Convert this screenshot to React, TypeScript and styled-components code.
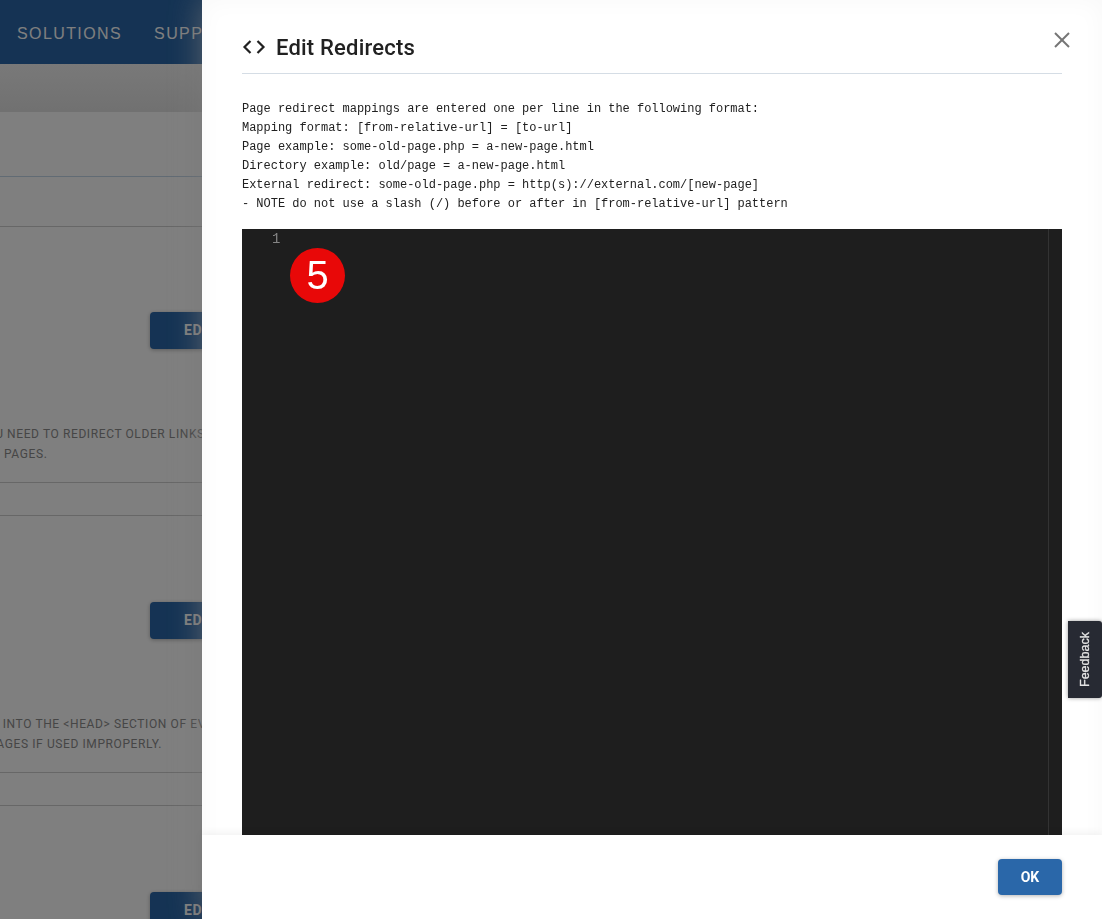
import React from "react";
import styled, { createGlobalStyle } from "styled-components";

const GlobalStyle = createGlobalStyle`
  html, body {
    margin: 0;
    height: 100%;
    overflow: hidden;
    background: #fff;
    font-family: "Roboto", "Liberation Sans", sans-serif;
  }
`;

const instructions = [
  "Page redirect mappings are entered one per line in the following format:",
  "Mapping format: [from-relative-url] = [to-url]",
  "Page example: some-old-page.php = a-new-page.html",
  "Directory example: old/page = a-new-page.html",
  "External redirect: some-old-page.php = http(s)://external.com/[new-page]",
  "- NOTE do not use a slash (/) before or after in [from-relative-url] pattern",
];

function App() {
  return (
    <>
      <GlobalStyle />
      <Page>
        <NavBar>
          <NavLink>SOLUTIONS</NavLink>
          <NavLink>SUPPORT</NavLink>
        </NavBar>
        <SubBar />
        <TabArea />
        <FieldRow />
        <Section $top={85}>
          <EditButton>EDIT</EditButton>
          <Description $shift={-36}>
            IF YOU NEED TO REDIRECT OLDER LINKS TO NEW
            <br />
            <Indent $width={40} />
            PAGES.
          </Description>
          <Rule $gap={18} />
          <Rule $gap={32} />
        </Section>
        <Section $top={86}>
          <EditButton>EDIT</EditButton>
          <Description $shift={-34}>
            CODE INTO THE &lt;HEAD&gt; SECTION OF EVERY
            <br />
            <Indent $width={23} />
            PAGES IF USED IMPROPERLY.
          </Description>
          <Rule $gap={18} />
          <Rule $gap={32} />
        </Section>
        <Section $top={86}>
          <EditButton>EDIT</EditButton>
        </Section>
      </Page>
      <Overlay />
      <Drawer>
        <DrawerHeader>
          <svg width="24" height="16" viewBox="0 0 24 16" fill="none" stroke="#212121" strokeWidth="2.2">
            <polyline points="8.5,2 2.5,8 8.5,14" />
            <polyline points="15.5,2 21.5,8 15.5,14" />
          </svg>
          <DrawerTitle>Edit Redirects</DrawerTitle>
          <CloseButton>
            <svg width="16" height="16" viewBox="0 0 16 16" stroke="#757575" strokeWidth="2">
              <line x1="1" y1="1" x2="15" y2="15" />
              <line x1="15" y1="1" x2="1" y2="15" />
            </svg>
          </CloseButton>
        </DrawerHeader>
        <Instructions>
          {instructions.map((line) => (
            <div key={line}>{line}</div>
          ))}
        </Instructions>
        <Editor>
          <LineNumber>1</LineNumber>
          <Badge>5</Badge>
          <Ruler />
        </Editor>
        <DrawerFooter>
          <OkButton>OK</OkButton>
        </DrawerFooter>
      </Drawer>
      <FeedbackTab>Feedback</FeedbackTab>
    </>
  );
}

const Page = styled.div`
  width: 100%;
  height: 919px;
  overflow: hidden;
`;
const NavBar = styled.div`
  height: 64px;
  background-color: #2a67a9;
  display: flex;
  align-items: center;
  padding: 3px 0 0 17px;
  gap: 32px;
  box-sizing: border-box;
`;
const NavLink = styled.div`
  font-family: "Liberation Sans", sans-serif;
  font-size: 16px;
  letter-spacing: 1.4px;
  color: #fff;
  white-space: nowrap;
`;
const SubBar = styled.div`
  height: 48px;
  background: linear-gradient(#f2f2f2, #e2e2e2);
`;
const TabArea = styled.div`
  height: 64px;
  border-bottom: 1px solid #c3d6e8;
`;
const FieldRow = styled.div`
  height: 49px;
  border-bottom: 1px solid #cfcfcf;
`;
const Section = styled.div<{ $top: number }>`
  padding-top: ${(p) => p.$top}px;
`;
const EditButton = styled.div`
  margin-left: 150px;
  width: 120px;
  height: 37px;
  border-radius: 4px;
  background-color: #2a67a9;
  color: #fff;
  font-size: 14px;
  font-weight: 700;
  letter-spacing: 0.5px;
  line-height: 37px;
  padding-left: 34px;
  box-sizing: border-box;
  box-shadow: 0 1px 4px rgba(0, 0, 0, 0.3);
`;
const Description = styled.div<{ $shift: number }>`
  margin: 75px 0 0 ${(p) => p.$shift}px;
  font-size: 12px;
  line-height: 20px;
  letter-spacing: 0.6px;
  color: #8c8c8c;
  white-space: nowrap;
`;
const Indent = styled.span<{ $width: number }>`
  display: inline-block;
  width: ${(p) => p.$width}px;
`;
const Rule = styled.div<{ $gap: number }>`
  margin-top: ${(p) => p.$gap}px;
  border-top: 1px solid #cfcfcf;
`;
const Overlay = styled.div`
  position: fixed;
  inset: 0;
  background-color: rgba(0, 0, 0, 0.5);
`;
const Drawer = styled.div`
  position: fixed;
  top: 0;
  bottom: 0;
  left: 202px;
  right: 0;
  background-color: #fff;
  display: flex;
  flex-direction: column;
  padding: 0 40px;
  box-sizing: border-box;
  box-shadow: 0 0 30px rgba(120, 120, 120, 0.7), inset 0 0 24px rgba(0, 0, 0, 0.03);
`;
const DrawerHeader = styled.div`
  position: relative;
  flex: none;
  height: 74px;
  padding-top: 21px;
  box-sizing: border-box;
  display: flex;
  align-items: center;
  gap: 10px;
  border-bottom: 1px solid #d5dde5;
  svg {
    display: block;
  }
`;
const DrawerTitle = styled.div`
  font-size: 22px;
  font-weight: 500;
  letter-spacing: 0.2px;
  color: #212121;
`;
const CloseButton = styled.div`
  position: absolute;
  right: -8px;
  top: 32px;
`;
const Instructions = styled.div`
  flex: none;
  margin-top: 26px;
  font-family: "Liberation Mono", monospace;
  font-size: 12px;
  letter-spacing: -0.02px;
  line-height: 19px;
  color: #212121;
  white-space: pre;
`;
const Editor = styled.div`
  position: relative;
  flex: 1;
  margin-top: 15px;
  background-color: #1e1e1e;
  min-height: 0;
`;
const LineNumber = styled.div`
  position: absolute;
  left: 30px;
  top: 1px;
  font-family: "Liberation Mono", monospace;
  font-size: 14px;
  line-height: 18px;
  color: #858585;
`;
const Badge = styled.div`
  position: absolute;
  left: 48px;
  top: 19px;
  width: 55px;
  height: 55px;
  border-radius: 50%;
  background-color: #e80808;
  color: #fff;
  font-family: "Liberation Sans", sans-serif;
  font-size: 40px;
  line-height: 55px;
  text-align: center;
`;
const Ruler = styled.div`
  position: absolute;
  top: 0;
  bottom: 0;
  right: 13px;
  width: 1px;
  background-color: #333;
`;
const DrawerFooter = styled.div`
  flex: none;
  height: 84px;
  margin: 0 -40px;
  padding: 24px 40px 0;
  box-sizing: border-box;
  background-color: #fff;
  display: flex;
  justify-content: flex-end;
  align-items: flex-start;
  position: relative;
  box-shadow: 0 -2px 8px rgba(0, 0, 0, 0.06);
`;
const OkButton = styled.div`
  width: 64px;
  height: 36px;
  border-radius: 4px;
  background-color: #2a67a9;
  color: #fff;
  font-size: 14px;
  font-weight: 700;
  line-height: 36px;
  text-align: center;
  box-shadow: 0 1px 4px rgba(0, 0, 0, 0.3);
`;
const FeedbackTab = styled.div`
  position: fixed;
  right: 0;
  top: 621px;
  width: 34px;
  height: 77px;
  background-color: #272a33;
  border-radius: 3px 0 0 3px;
  box-shadow: 0 0 4px rgba(0, 0, 0, 0.4);
  color: #e4e4e4;
  font-family: "Liberation Sans", sans-serif;
  font-size: 12.5px;
  -webkit-text-stroke: 0.3px #e4e4e4;
  display: flex;
  align-items: center;
  justify-content: center;
  writing-mode: vertical-rl;
  transform: rotate(180deg);
`;

export default App;
